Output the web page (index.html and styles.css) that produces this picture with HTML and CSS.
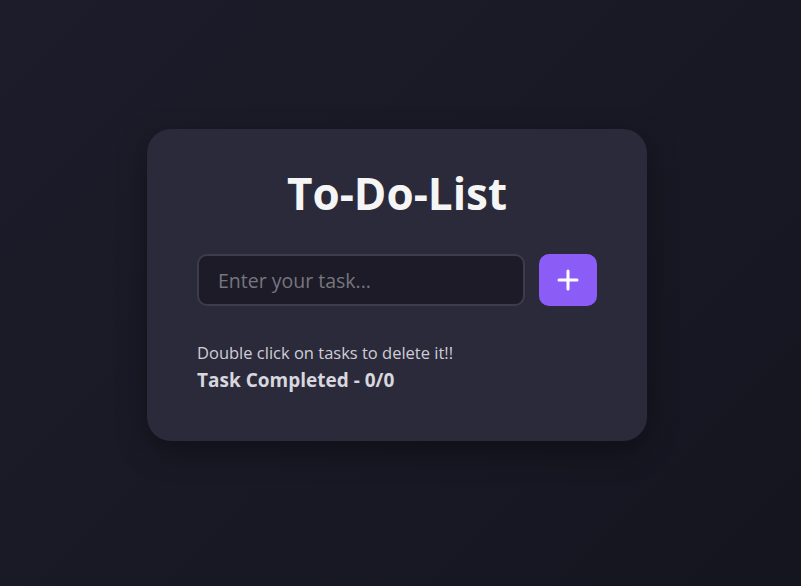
FILE: index.html
```html
<!DOCTYPE html>
<html lang="en">
<head>
<meta charset="UTF-8">
<title>To-Do-List</title>
<link rel="stylesheet" href="styles.css">
</head>
<body>
<main class="page">
  <section class="card">
    <h1 class="title">To-Do-List</h1>
    <form class="add-row" onsubmit="return false">
      <input class="task-input" type="text" placeholder="Enter your task...">
      <button class="add-btn" type="submit" aria-label="Add task">
        <svg width="22" height="22" viewBox="0 0 22 22" aria-hidden="true">
          <path d="M11 2v18M2 11h18" stroke="#ffffff" stroke-width="3" stroke-linecap="round" fill="none"/>
        </svg>
      </button>
    </form>
    <p class="hint">Double click on tasks to delete it!!</p>
    <p class="count">Task Completed - 0/0</p>
  </section>
</main>
</body>
</html>
```

FILE: styles.css
```css
* { box-sizing: border-box; }
html, body { margin: 0; height: 100%; }
body {
  font-family: "Open Sans", "Noto Sans", sans-serif;
  background: linear-gradient(135deg, #1d1c2a 0%, #151520 100%);
  color: #f5f5f5;
}
.page {
  min-height: 100vh;
  display: flex;
  align-items: center;
  justify-content: center;
  padding: 0 7px 16px 0;
}
.card {
  width: 500px;
  height: 312px;
  background: #2b2a3b;
  border-radius: 24px;
  padding: 38px 50px 40px;
  box-shadow: 0 10px 30px rgba(0, 0, 0, 0.35);
}
.title {
  margin: 0;
  text-align: center;
  font-size: 44px;
  font-weight: 700;
  line-height: 52px;
  color: #f5f5f5;
}
.add-row {
  display: flex;
  gap: 14px;
  margin: 35px 0 0;
}
.task-input {
  flex: 1;
  height: 52px;
  background: #1c1b27;
  border: 2px solid #3d3c48;
  border-radius: 10px;
  padding: 0 19px;
  font-family: inherit;
  font-size: 19.5px;
  color: #f5f5f5;
  outline: none;
}
.task-input::placeholder { color: #77767f; }
.add-btn {
  width: 58px;
  height: 52px;
  border: none;
  border-radius: 10px;
  background: #8b5cf6;
  display: flex;
  align-items: center;
  justify-content: center;
  padding: 0;
  cursor: pointer;
}
.hint {
  margin: 36px 0 0;
  font-size: 16.5px;
  line-height: 22px;
  color: #cfced6;
}
.count {
  margin: 4px 0 0;
  font-size: 19px;
  font-weight: 700;
  line-height: 24px;
  color: #d8d7de;
}
```
